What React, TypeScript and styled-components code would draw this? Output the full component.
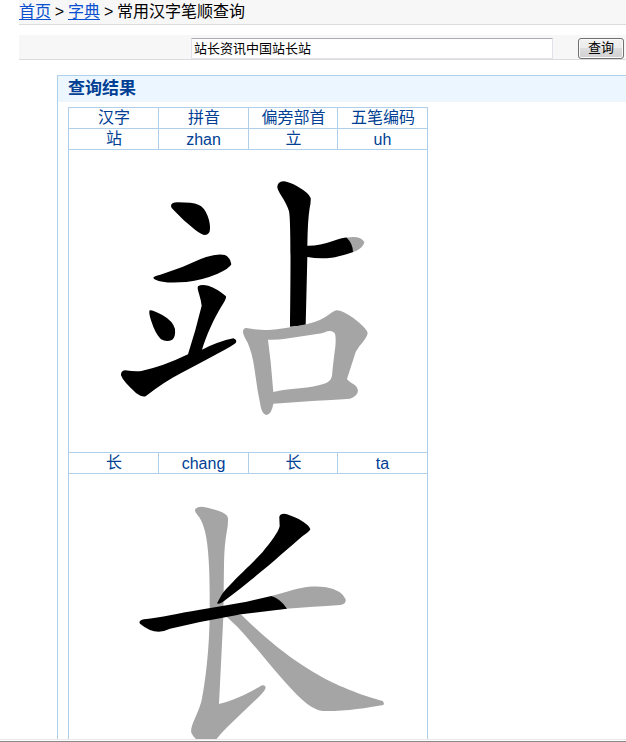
import React from "react";
import styled, { createGlobalStyle } from "styled-components";

const GlobalStyle = createGlobalStyle`
  * { box-sizing: border-box; }
  html, body { margin: 0; padding: 0; background: #fff; overflow: hidden; }
  body { font-family: "Liberation Sans", "Noto Sans CJK SC", sans-serif; font-size: 16px; color: #000; }
`;

const Page = styled.div`
  width: 626px;
  height: 742px;
  display: flex;
  flex-direction: column;
  overflow: hidden;
`;

const Breadcrumb = styled.nav`
  flex: none;
  height: 25px;
  margin-left: 19px;
  background: #f7f7f7;
  border-bottom: 1px solid #dcdcde;
  line-height: 24px;
  white-space: pre;
  word-spacing: -0.6px;
`;

const CrumbLink = styled.a`
  display: inline-block;
  height: 20px;
  border-bottom: 1px solid #0a50d0;
  color: #0a50d0;
  line-height: 24px;
  vertical-align: top;
`;

const SearchBar = styled.form`
  flex: none;
  display: flex;
  align-items: flex-start;
  height: 25px;
  margin: 10px 0 0 19px;
  padding: 3px 0 0 172px;
  background: #f7f7f7;
  border-bottom: 1px solid #dcdcde;
`;

const SearchInput = styled.input`
  width: 362px;
  height: 21px;
  margin: 0;
  padding: 0 2px 3px;
  border: 1px solid #e2e3ea;
  border-top-color: #abadb3;
  border-radius: 1px;
  background: #fff;
  color: #000;
  font: 13px/16px "Liberation Sans", "Noto Sans CJK SC", sans-serif;
  outline: none;
`;

const SearchButton = styled.button`
  width: 46px;
  height: 21px;
  margin: 0 0 0 25px;
  padding: 0 0 2px;
  border: 1px solid #707070;
  border-radius: 3px;
  background: linear-gradient(#f2f2f2, #ebebeb 50%, #dddddd 50%, #cfcfcf) border-box;
  box-shadow: inset 0 0 0 1px #fafafa;
  color: #000;
  font: 13px/17px "Liberation Sans", "Noto Sans CJK SC", sans-serif;
`;

const Panel = styled.section`
  flex: 1;
  min-height: 0;
  margin: 15px 0 0 57px;
  border-left: 1px solid #b0cfea;
  border-top: 1px solid #b0cfea;
  overflow: hidden;
`;

const PanelTitle = styled.h2`
  height: 26px;
  margin: 0 0 5px;
  padding-left: 10px;
  background: #ebf6ff;
  color: #003f94;
  font-size: 17px;
  font-weight: 700;
  line-height: 25px;
`;

const Results = styled.div`
  width: 360px;
  margin-left: 10px;
  border: 1px solid #b0cfea;
  border-bottom: 0;
`;

const Row = styled.div`
  display: grid;
  grid-template-columns: 90px 90px 89px 89px;
  grid-template-rows: 20px;
  height: 21px;
  border-bottom: 1px solid #b0cfea;
`;

const Cell = styled.div<{ $last?: boolean; $latin?: boolean }>`
  border-right: ${(p) => (p.$last ? "0" : "1px solid #b0cfea")};
  padding-left: ${(p) => (p.$latin ? "0" : "1px")};
  color: #003f94;
  line-height: ${(p) => (p.$latin ? "22px" : "20px")};
  text-align: center;
  white-space: nowrap;
`;

const StrokePanel = styled.div`
  height: 303px;
  border-bottom: 1px solid #b0cfea;
`;

const StrokeDrawing = styled.svg`
  display: block;
  width: 358px;
  height: 302px;
`;

const WindowEdge = styled.footer`
  flex: none;
  height: 3px;
  border-top: 1px solid #e8e8e8;
  border-bottom: 1px solid #898989;
`;

const PENDING = "#a5a5a5";

function DataRow({ values }: { values: string[] }) {
  return (
    <Row>
      {values.map((v, i) => (
        <Cell key={i} $last={i === values.length - 1} $latin={/^[a-z]+$/.test(v)}>{v}</Cell>
      ))}
    </Row>
  );
}

function ZhanStrokes() {
  return (
    <StrokeDrawing viewBox="69 150 358 302" role="img" aria-label="站">
      <g transform="translate(110 170) scale(.333333)">
        <path d="M183 109Q182 97 203 97Q247 97 265 104Q283 111 293 138Q301 160 300 177Q299 194 285 195Q276 195 256 180Q219 151 190 119Q184 114 183 109Z" />
        <path d="M130 323Q131 318 151 314L217 291L272 267Q318 249 345 255Q361 263 364 283Q358 296 323 311Q278 330 229 336Q158 341 137 329Q131 327 130 323Z" />
        <path d="M119 421Q129 420 157 435Q189 453 195 477Q197 501 187 509Q170 517 153 508Q136 492 124 454Q115 428 119 421Z" />
        <path d="M264 349Q273 342 295 347Q321 355 348 379Q350 386 335 408C313 443 287 501 276 539Q326 514 370 505Q383 510 377 519Q367 528 322 551Q263 583 215 608Q159 637 108 678Q99 684 78 669Q39 634 33 616Q32 603 45 601Q79 606 94 603Q158 590 234 553Q257 482 275 407Q273 390 267 371Q261 354 264 349Z" />
      </g>
      <g transform="translate(230 170) scale(.333333)">
        <path d="M142 49Q144 34 163 34Q179 37 204 50Q237 69 242 84Q243 96 239 114Q233 151 232 227Q266 228 311 212Q346 201 351 203L375 210L370 246Q330 260 305 263Q269 268 232 261L227 466L180 470C181 360 184 154 177 124Q172 105 154 77Q141 58 142 49Z" />
        <path fill={PENDING} d="M350 203Q391 196 403 216Q402 226 387 238Q378 244 369 246Q369 221 350 203Z" />
        <path fill={PENDING} fillRule="evenodd" d="M39 486Q39 474 49 474C70 478 88 480 116 480Q161 477 232 462Q272 454 298 433Q314 421 321 421Q337 422 370 444Q413 477 413 490Q411 503 388 529Q376 544 372 562L351 627Q354 633 371 643Q382 650 384 662Q383 678 360 686Q324 689 258 692L130 701Q125 733 109 735Q98 732 93 714L83 662L73 594Q67 550 53 518Q39 495 39 486ZM114 509L122 576L130 666Q162 659 209 655Q255 650 280 642Q303 635 306 617Q308 590 316 530Q319 495 313 488Q305 480 292 484Q275 492 246 494L161 507Q143 510 114 509Z" />
      </g>
    </StrokeDrawing>
  );
}

function ChangStrokes() {
  return (
    <StrokeDrawing viewBox="69 474 358 302" role="img" aria-label="长">
      <g fill={PENDING}>
        <path transform="translate(130 495) scale(.333333)" d="M195 44Q199 35 215 35C230 37 247 42 265 47Q291 55 294 69Q295 86 290 112Q283 151 282 206L280 365L267 627C312 617 363 590 396 571Q405 569 407 577Q407 586 387 605L292 696Q272 716 258 734Q245 755 230 767L208 742Q188 724 184 713Q181 701 193 674Q213 631 216 610C226 561 240 453 239 335Q240 173 226 114C221 89 211 69 202 59Q194 51 195 44Z" />
        <g transform="translate(200 495) scale(.333333)">
          <path d="M214 303L255 292C304 276 340 271 379 277Q424 285 437 313Q440 327 421 330C365 335 314 336 258 341L205 346Z" />
          <path d="M75 361L124 359C181 416 247 472 303 508C378 558 421 574 482 598Q530 614 548 618Q554 625 550 630C501 639 427 650 367 648Q339 645 305 613C249 562 161 446 112 395Z" />
        </g>
      </g>
      <g transform="translate(200 495) scale(.333333)">
        <path d="M238 70Q236 57 253 56Q267 58 296 72Q329 91 331 103Q327 111 308 123C249 173 183 235 77 314Q58 330 51 325C61 307 65 294 85 275C125 233 156 206 188 171C209 145 235 113 239 94Z" />
        <path d="M214 303Q240 310 261 341L124 358L0 381L-90 401Q-106 409-124 410Q-151 410-180 386Q-186 377-168 373C-113 367-71 355 0 344Q72 332 140 320Z" />
      </g>
    </StrokeDrawing>
  );
}

export default function App() {
  return (
    <>
      <GlobalStyle />
      <Page>
        <Breadcrumb>
          <CrumbLink>首页</CrumbLink> &gt; <CrumbLink>字典</CrumbLink> &gt; 常用汉字笔顺查询
        </Breadcrumb>
        <SearchBar onSubmit={(e) => e.preventDefault()}>
          <SearchInput defaultValue="站长资讯中国站长站" />
          <SearchButton type="submit">查询</SearchButton>
        </SearchBar>
        <Panel>
          <PanelTitle>查询结果</PanelTitle>
          <Results>
            <DataRow values={["汉字", "拼音", "偏旁部首", "五笔编码"]} />
            <DataRow values={["站", "zhan", "立", "uh"]} />
            <StrokePanel><ZhanStrokes /></StrokePanel>
            <DataRow values={["长", "chang", "长", "ta"]} />
            <StrokePanel><ChangStrokes /></StrokePanel>
          </Results>
        </Panel>
        <WindowEdge />
      </Page>
    </>
  );
}
